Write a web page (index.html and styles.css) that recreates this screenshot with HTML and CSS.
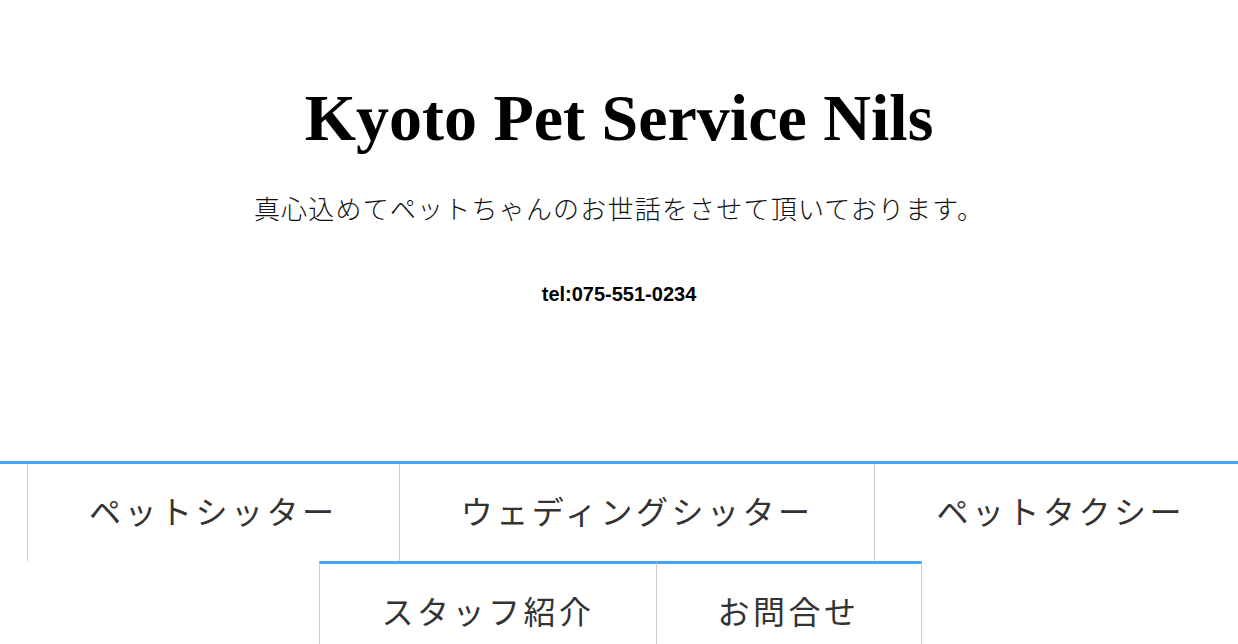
FILE: index.html
```html
<!DOCTYPE html>
<html lang="ja">
<head>
    <meta charset="UTF-8">
    <meta name="viewport" content="width=device-width, initial-scale=1.0">
    <title>Kyoto Pet Service Nils</title>
    <link rel="stylesheet" href="styles.css">
</head>
<body>

<header class="site-header">
    <h1 class="site-title">Kyoto Pet Service Nils</h1>
    <p class="site-desc">真心込めてペットちゃんのお世話をさせて頂いております。</p>
    <p class="site-tel">tel:075-551-0234</p>
</header>

<nav class="global-nav">
    <ul class="nav-row nav-main">
        <li><a href="#">ペットシッター</a></li>
        <li><a href="#">ウェディングシッター</a></li>
        <li><a href="#">ペットタクシー</a></li>
    </ul>
    <ul class="nav-row nav-sub">
        <li><a href="#">スタッフ紹介</a></li>
        <li><a href="#">お問合せ</a></li>
    </ul>
</nav>

</body>
</html>
```

FILE: styles.css
```css
/* base */
body {
    margin: 0;
    font-family: "Noto Sans CJK JP", "Liberation Sans", sans-serif;
    color: #222;
    background: #fff;
}

.site-header {
    text-align: center;
    padding-top: 78px;
}
.site-title {
    font-family: "Liberation Serif", "Noto Sans CJK JP", serif;
    font-size: 66px;
    font-weight: bold;
    line-height: 1.2;
    color: #000;
    margin: 0;
}
.site-desc {
    font-size: 26px;
    font-weight: 300;
    line-height: 39px;
    letter-spacing: 1.2px;
    margin: 31px 0 0;
    color: #111;
}
.site-tel {
    font-family: "Liberation Sans", Arial, sans-serif;
    font-size: 20px;
    font-weight: bold;
    line-height: 24px;
    margin: 55px 0 0;
    color: #000;
}

/* navigation */
.global-nav {
    margin-top: 155px;
    overflow: hidden;
}
.nav-row {
    list-style: none;
    display: flex;
    justify-content: center;
    margin: 0;
}
.nav-main {
    border-top: 3px solid #42a5f5;
    padding: 0 0 0 36px;
}
.nav-sub {
    padding: 0 0 0 3px;
}
.nav-row li {
    flex-shrink: 0;
    border-left: 1px solid #ccc;
}
.nav-row li:last-child {
    border-right: 1px solid #ccc;
}
.nav-sub li {
    border-top: 3px solid #42a5f5;
}
.nav-row a {
    display: block;
    padding: 22px 61px 27px;
    font-size: 32px;
    line-height: 48px;
    letter-spacing: 3.5px;
    color: #333;
    text-decoration: none;
}
```
